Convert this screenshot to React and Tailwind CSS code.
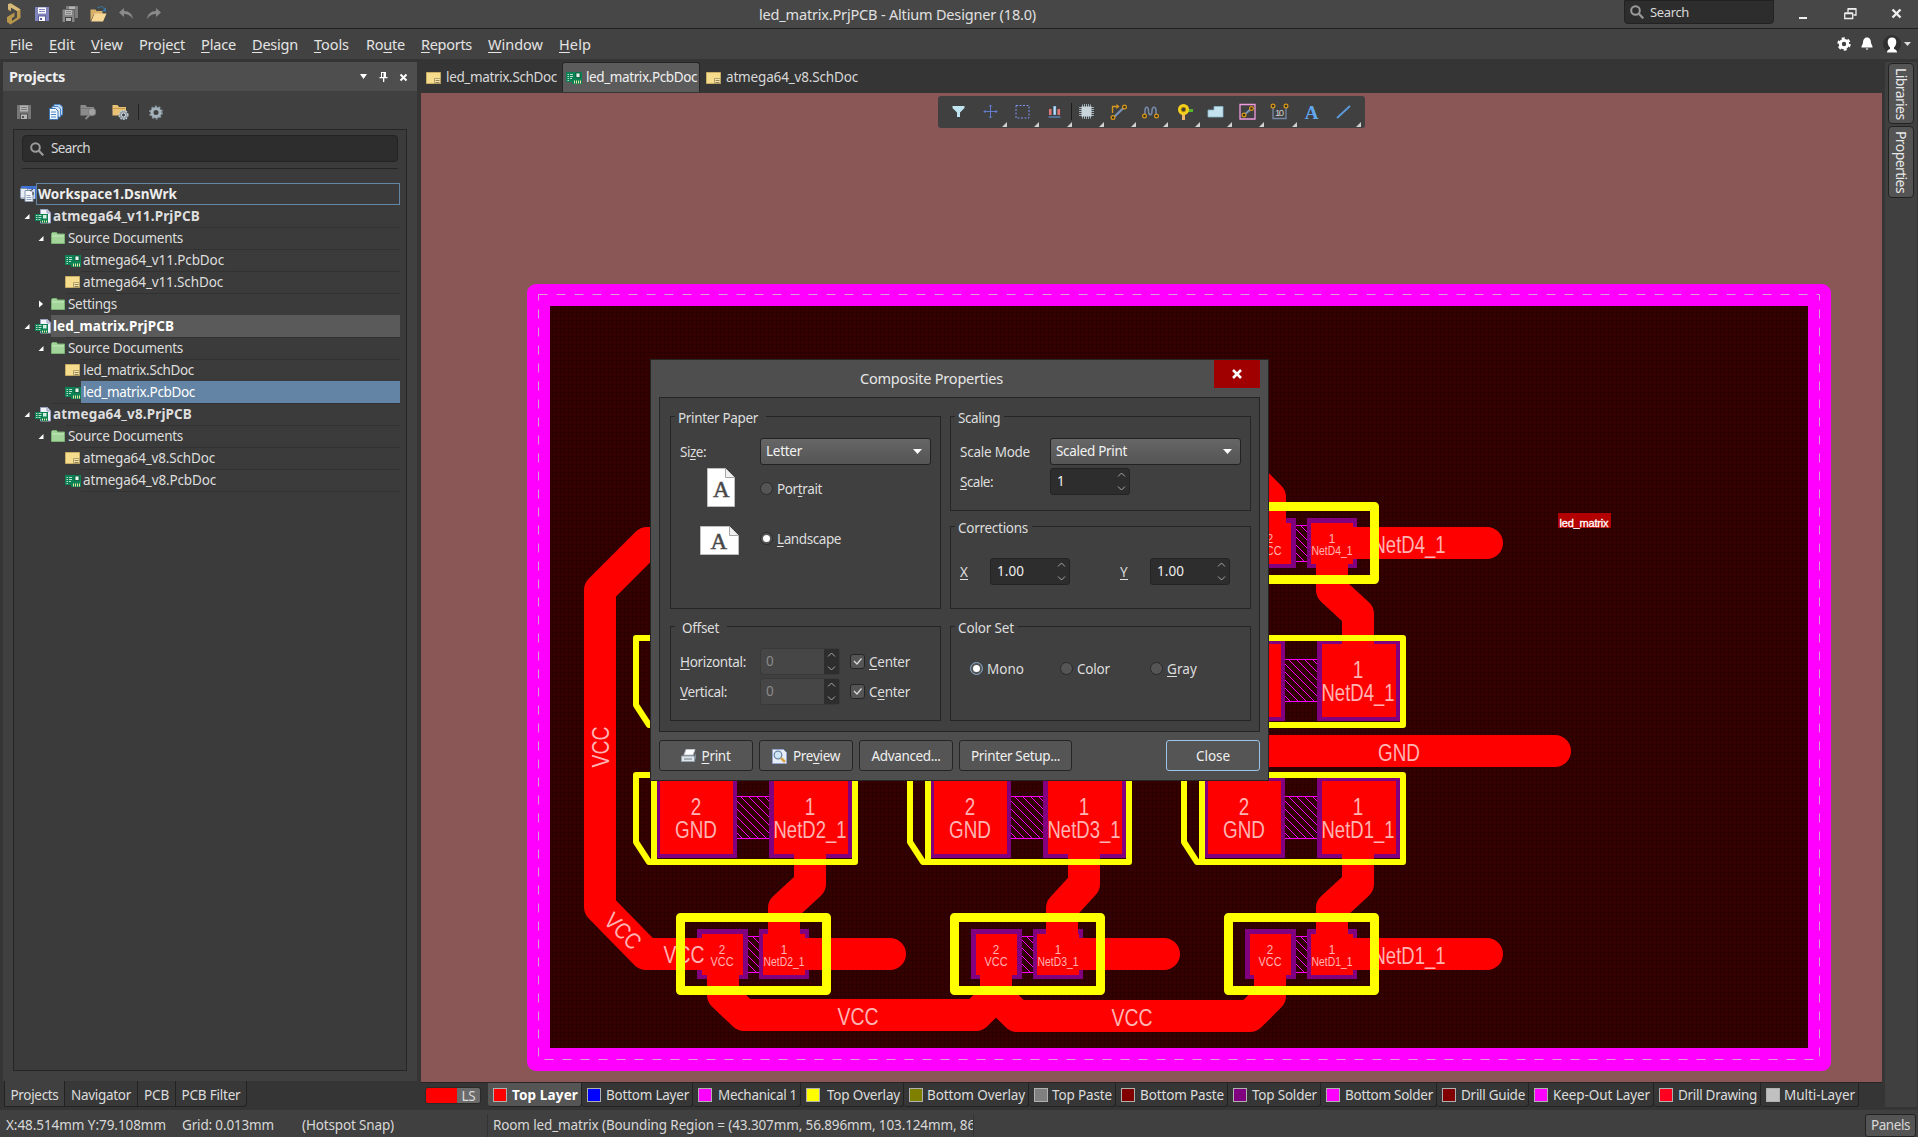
import React, { useLayoutEffect, useRef, useState } from "react";

/* A label whose letter spacing is tuned so that it fills the given width. */
function Fit({ w, children, className = "" }) {
  const ref = useRef(null);
  const [spacing, setSpacing] = useState(0);
  useLayoutEffect(() => {
    const el = ref.current;
    const n = el.textContent.length;
    if (w && n) setSpacing((w - el.getBoundingClientRect().width) / n);
  }, [w]);
  return (
    <span ref={ref} className={"inline-block shrink-0 whitespace-pre " + className} style={{ letterSpacing: spacing + "px" }}>
      {children}
    </span>
  );
}

/* Text with an underlined mnemonic letter, marked by "&". */
function Mn({ t, w, className }) {
  const i = t.indexOf("&");
  if (i < 0) return <Fit w={w} className={className}>{t}</Fit>;
  return (
    <Fit w={w} className={className}>
      {t.slice(0, i)}
      <span className="underline decoration-1 underline-offset-2">{t[i + 1]}</span>
      {t.slice(i + 2)}
    </Fit>
  );
}

/* ---------- small icons ---------- */

const Logo = () => (
  <svg width="16" height="22" viewBox="0 0 16 22" className="shrink-0">
    <path d="M2 1v6l3 1.500V4.500l6 3.500v6.500l-5 3.500v-3l2.500-1.500V9.500L1 14v5l3.500 2.500L14.500 15V6.500L5 0.500z" fill="#b8964c" />
    <path d="M2 1v5l3 1V4.500l6 3.500 3.500-1.500L5 0.500z" fill="#d6b878" />
  </svg>
);
const Floppy = ({ a, b, d }) => (
  <svg width="14" height="14" viewBox="0 0 14 14" className="shrink-0">
    <path d="M0 0h14v14H0z" fill={a} />
    <path d="M3 0.500h8v6H3z" fill={b} />
    <path d="M4 2h6v1H4zM4 4h6v1H4z" fill={a} />
    <path d="M3 8.500h8V14H3z" fill={d} />
    <path d="M4 9.500h6V14H4z" fill={b} />
    <path d="M5 11h2v2H5z" fill={d} />
  </svg>
);
const FloppyAll = () => (
  <svg width="16" height="16" viewBox="0 0 16 16" className="shrink-0">
    <path d="M4 0h12v12H4z" fill="#7d7d7d" />
    <path d="M7 0.500h6v3H7z" fill="#b5b5b5" />
    <path d="M0 3h13v13H0z" fill="#444" />
    <path d="M0.500 3.500h12V16H0.500z" fill="#858585" />
    <path d="M3 4h7v5H3z" fill="#b5b5b5" />
    <path d="M4 5h5v1H4zM4 7h5v1H4z" fill="#858585" />
    <path d="M3 11h7v5H3z" fill="#444" />
    <path d="M4 12h5v3H4z" fill="#b5b5b5" />
  </svg>
);
const OpenFolder = () => (
  <svg width="17" height="16" viewBox="0 0 17 16" className="shrink-0">
    <path d="M0.500 15V3.500h5l1 1.500h6v3H4z" fill="#d9b169" />
    <path d="M1 15.500 4.500 7.500h12L13 15.500z" fill="#f7d796" />
    <path d="M8 2c2-2 5-2 6.500 1" fill="none" stroke="#3779a8" strokeWidth="1.300" strokeDasharray="2 1" />
    <path d="M16 1.500v4h-4z" fill="#3779a8" />
  </svg>
);
const Undo = ({ flip }) => (
  <svg width="15" height="12" viewBox="0 0 15 12" className={flip ? "shrink-0 -scale-x-100" : "shrink-0"}>
    <path d="M5 0 0 4.500 5 9V6c4 0 6.500 1.500 9 5-0.500-5-4-8-9-8z" fill="#8a8a8a" />
  </svg>
);
const Docs = () => (
  <svg width="14" height="16" viewBox="0 0 14 16" className="shrink-0">
    <path d="M5 0.500h6l2.500 2.500v8H5z" fill="#bfd9f2" stroke="#4e86c4" />
    <path d="M3 2.500h6l2.500 2.500v8H3z" fill="#d8e9f8" stroke="#4e86c4" />
    <path d="M0.500 4.500h6L9 7v8.500H0.500z" fill="#edf6fd" stroke="#3c74b4" />
    <path d="M2 8h5M2 10.500h5M2 13h5" stroke="#4e86c4" />
  </svg>
);
const FolderTool = ({ gray }) => (
  <svg width="17" height="16" viewBox="0 0 17 16" className="shrink-0">
    <path d="M0.500 1h5l1.500 2h7v8.500H0.500z" fill={gray ? "#8b8b8b" : "#e9c277"} />
    <path d="M0.500 4.500h13" stroke={gray ? "#777" : "#c79b4c"} />
    {gray ? (
      <>
        <circle cx="12" cy="8" r="3.800" fill="#a2a2a2" stroke="#7b7b7b" />
        <path d="m9.500 11-4 4" stroke="#8b8b8b" strokeWidth="1.800" />
      </>
    ) : (
      <>
        <circle cx="11.500" cy="11" r="4.400" fill="#8f9ba3" stroke="#c2cdd4" strokeDasharray="1.600 1.200" strokeWidth="1.400" />
        <circle cx="11.500" cy="11" r="2" fill="#404040" stroke="#d3dde3" />
      </>
    )}
  </svg>
);
const GearRound = () => (
  <svg width="14" height="15" viewBox="0 0 14 15" className="shrink-0">
    <circle cx="7" cy="7.500" r="5.900" fill="none" stroke="#8b98a1" strokeWidth="2" strokeDasharray="2 1.700" />
    <circle cx="7" cy="7.500" r="4" fill="none" stroke="#a3b1ba" strokeWidth="3" />
  </svg>
);
const Lens = ({ size = 14 }) => (
  <svg width={size} height={size} viewBox="0 0 14 14" className="shrink-0">
    <circle cx="5.500" cy="5.500" r="4.300" fill="none" stroke="#9b9b9b" strokeWidth="2" />
    <path d="m8.800 8.800 4.500 4.500" stroke="#9b9b9b" strokeWidth="2.200" />
  </svg>
);
const SchIcon = () => (
  <svg width="15" height="12" viewBox="0 0 15 12" className="shrink-0">
    <path d="M0.500 0.500h14v11H0.500z" fill="#f6dc8d" stroke="#c9ac66" />
    <path d="M8.500 6.500h6v5h-6z" fill="#f3e2ab" stroke="#a8935a" strokeWidth="0.800" />
    <path d="M9.500 8.500h4M9.500 10.500h4" stroke="#8a7847" strokeWidth="0.900" />
  </svg>
);
const PcbIcon = () => (
  <svg width="16" height="13" viewBox="0 0 16 13" className="shrink-0">
    <path d="M0 1h16v10H0z" fill="#0c8154" />
    <path d="M10 2h4v4.500h-4z" fill="#e8f3ee" stroke="#064f33" strokeWidth="0.800" />
    <path d="M1.500 3.500h1.500M1.500 5.500h1.500M1.500 7.500h1.500M1.500 9.500h1.500M4 3.500h3M4 5.500h3M4 7.500h2" stroke="#b7dccb" />
    <path d="M6 11h10v2H6z" fill="#0c8154" />
    <path d="M8.500 9.500v3M10.500 9.500v3M12.500 9.500v3M14.500 9.500v3" stroke="#e6e6a0" />
  </svg>
);
const PrjIcon = () => (
  <svg width="16" height="15" viewBox="0 0 16 15" className="shrink-0">
    <path d="M5.500 0.500h7L15.500 4v10h-10z" fill="#f1f3fa" stroke="#9ea3c2" />
    <path d="M12 0.500V4h3.500" fill="#c6cbe0" stroke="#9ea3c2" />
    <path d="M0 5h13v7H0z" fill="#0c8154" />
    <path d="M6 12h7v2H6z" fill="#0c8154" />
    <path d="M8 6h3.500v3.500H8z" fill="#d8f0e4" />
    <path d="M1 6.500h1.500M1 8.500h1.500M1 10.500h1.500M3.500 6.500h3M3.500 8.500h3M3.500 10.500h2" stroke="#b7dccb" />
    <path d="M7.500 11.500v2M9.500 11.500v2M11.500 11.500v2" stroke="#e6e6a0" />
  </svg>
);
const FolderGreen = () => (
  <svg width="14" height="12" viewBox="0 0 14 12" className="shrink-0">
    <path d="M0.500 11.500V1.500l1-1h4l1 1.500h7v9.500z" fill="#a3d59b" stroke="#7bb274" />
    <path d="M1 4h12" stroke="#c6eabf" />
  </svg>
);
const WsIcon = () => (
  <svg width="16" height="16" viewBox="0 0 16 16" className="shrink-0">
    <path d="M1 0h15v13H1z" fill="#3f73d6" />
    <path d="M1 3h14v10H1z" fill="#c9d5e6" />
    <path d="M0.500 2.500h6l2 2V12h-8z" fill="#e8eef6" stroke="#8494ad" />
    <path d="M5 4.500h6l2 2v9H5z" fill="#f4f7fb" stroke="#8494ad" />
    <path d="M6.500 9.500h4M6.500 11.500h5M6.500 13.500h5" stroke="#8ea3c0" />
    <path d="m10 5 3-2M13 6v3" stroke="#333" />
  </svg>
);
const Tri = ({ open }) => (
  <svg width="6" height="8" viewBox="0 0 6 8" className="shrink-0">
    {open ? <path d="M5.500 2v5H0.500z" fill="#fff" /> : <path d="M1 0.500 5 4 1 7.500z" fill="#fff" />}
  </svg>
);

/* ---------- top bars ---------- */

const MENUS = [
  ["&File", 23, "w-[39px]"], ["&Edit", 26, "w-[42px]"], ["&View", 32, "w-[48px]"], ["Proje&ct", 46, "w-[62px]"],
  ["&Place", 35, "w-[51px]"], ["&Design", 46, "w-[62px]"], ["&Tools", 35, "w-[52px]"], ["Ro&ute", 39, "w-[55px]"],
  ["&Reports", 51, "w-[67px]"], ["&Window", 55, "w-[71px]"], ["&Help", 32, "w-[40px]"],
];

function TitleBar() {
  return (
    <div className="flex h-[29px] shrink-0 border-b border-[#212121] bg-[#474747]">
      <div className="flex w-[759px] items-start pl-[6px]">
        <div className="mt-[3px] w-[29px]"><Logo /></div>
        <div className="mt-[7px] w-[27px]"><Floppy a="#8183bd" b="#fff" d="#5d5f9d" /></div>
        <div className="mt-[6px] w-[28px]"><FloppyAll /></div>
        <div className="mt-[6px] w-[29px]"><OpenFolder /></div>
        <div className="mt-[8px] w-[27px]"><Undo /></div>
        <div className="mt-[8px]"><Undo flip /></div>
      </div>
      <Fit w={277} className="text-[14.500px] leading-[28px] text-[#e0e0e0]">led_matrix.PrjPCB - Altium Designer (18.0)</Fit>
      <div className="ml-auto flex items-start">
        <div className="flex h-[24px] w-[150px] items-center gap-[6px] rounded-b border border-[#222] bg-[#2d2d2d] pl-[5px]">
          <Lens size={14} />
          <Fit w={39} className="mt-[2px] text-[13px] text-[#d8d8d8]">Search</Fit>
        </div>
        <svg width="144" height="28" viewBox="0 0 144 28" className="shrink-0">
          <path d="M25 18h8" stroke="#eee" strokeWidth="2" />
          <path d="M74 12.500V9h8v6h-2.500" fill="none" stroke="#eee" strokeWidth="1.300" />
          <path d="M70.700 13.500h8v5h-8zM70.700 12.800h8M74 8.700h8" fill="none" stroke="#eee" strokeWidth="1.300" />
          <path d="m118.500 9.500 8 8m0-8-8 8" stroke="#eee" strokeWidth="2.400" />
        </svg>
      </div>
    </div>
  );
}

function MenuBar() {
  return (
    <div className="flex h-[30px] shrink-0 items-center bg-[#424242] pl-[10px] text-[14.500px] text-[#e4e4e4]">
      {MENUS.map(([t, w, cell]) => (
        <div key={t} className={"flex shrink-0 pt-[2px] " + cell}><Mn t={t} w={w} /></div>
      ))}
      <svg width="82" height="30" viewBox="0 0 82 30" className="ml-auto shrink-0">
        <circle cx="8" cy="15" r="3.700" fill="none" stroke="#fff" strokeWidth="3" />
        <circle cx="8" cy="15" r="5.700" fill="none" stroke="#fff" strokeWidth="2" strokeDasharray="3 2.970" />
        <path d="M31 8.500c-3 0-4 2.500-4 5.500l-1.500 3.500v1h11v-1L35 14c0-3-1-5.500-4-5.500zM29.500 19.500h3l-1.500 1.500z" fill="#fff" />
        <circle cx="56" cy="15" r="9" fill="#303030" />
        <path d="M56 8.500c-3 0-4.300 2-4.300 4.500 0 2 1 4.500 2.300 5.500v1.500c-2 0.500-3 1.500-3 3.500h10c0-2-1-3-3-3.500v-1.500c1.300-1 2.300-3.500 2.300-5.500 0-2.500-1.300-4.500-4.300-4.500z" fill="#fff" />
        <path d="M68 13h7l-3.500 4z" fill="#ddd" />
      </svg>
    </div>
  );
}

/* ---------- projects panel ---------- */

const TREE = [
  [0, "prj", "atmega64_v11.PrjPCB", 147, true],
  [1, "dir", "Source Documents", 115, true],
  [2, "pcb", "atmega64_v11.PcbDoc", 141],
  [2, "sch", "atmega64_v11.SchDoc", 140],
  [1, "dir", "Settings", 49, false],
  [0, "prj", "led_matrix.PrjPCB", 121, true, "focus"],
  [1, "dir", "Source Documents", 115, true],
  [2, "sch", "led_matrix.SchDoc", 111],
  [2, "pcb", "led_matrix.PcbDoc", 112, undefined, "sel"],
  [0, "prj", "atmega64_v8.PrjPCB", 139, true],
  [1, "dir", "Source Documents", 115, true],
  [2, "sch", "atmega64_v8.SchDoc", 132],
  [2, "pcb", "atmega64_v8.PcbDoc", 133],
];
const LEFT = ["w-[37px]", "w-[52px]", "w-[67px]"];
const ICON = { prj: <PrjIcon />, dir: <FolderGreen />, pcb: <PcbIcon />, sch: <SchIcon /> };
const RULE = ["before:left-[37px]", "before:left-[52px]", "before:left-[67px]"];

function TreeRow({ row, next }) {
  const [lvl, kind, text, w, open, state] = row;
  const bg = state === "focus" ? "bg-[#5a5a5a] text-white" : state === "sel" ? "bg-[#6384a4] text-white" : "text-[#dedede]";
  return (
    <div className={"relative flex h-[22px] before:absolute before:right-0 before:-bottom-px before:h-px before:bg-[#323232] " + RULE[next]}>
      <div className={"flex shrink-0 items-center justify-end " + LEFT[lvl]}>
        {open !== undefined && <Tri open={open} />}
        <span className={kind === "prj" ? "ml-[5px] flex w-[16px]" : kind === "dir" ? "ml-[7px] flex w-[15px]" : "flex w-[16px]"}>{ICON[kind]}</span>
      </div>
      <div className={"flex flex-1 items-center pl-[2px] text-[13.500px] " + bg + (lvl === 0 ? " font-bold" : "")}>
        <Fit w={w} className="mt-px">{text}</Fit>
      </div>
    </div>
  );
}

function ProjectsPanel() {
  return (
    <div className="flex w-[421px] shrink-0 flex-col pt-[3px] pl-[3px]">
      <div className="flex h-[29px] w-[414px] items-center bg-[#4e4e4e] pl-[6px]">
        <Fit w={56} className="text-[14.500px] font-bold text-[#f0f0f0]">Projects</Fit>
        <svg width="60" height="20" viewBox="0 0 60 20" className="mr-[3px] ml-auto">
          <path d="M6 7h7l-3.500 5z" fill="#fff" />
          <path d="M27 5h5v5h-5zM25.500 10h8v1.200h-8zM29 11h1.300v4H29z" fill="#fff" />
          <path d="M28 6h1.500v4H28z" fill="#4e4e4e" />
          <path d="m46.500 7.500 6 6m0-6-6 6" stroke="#fff" strokeWidth="2" />
        </svg>
      </div>
      <div className="h-[990px] w-[414px] bg-[#404040] px-[10px]">
        <div className="flex h-[38px] items-center pt-[4px] pl-[4px]">
          <div className="w-[32px]"><Floppy a="#777" b="#b5b5b5" d="#505050" /></div>
          <div className="w-[31px]"><Docs /></div>
          <div className="w-[32px]"><FolderTool gray /></div>
          <div className="w-[26px]"><FolderTool /></div>
          <div className="mr-[10px] h-[16px] w-px bg-[#222]" />
          <GearRound />
        </div>
        <div className="flex h-[942px] flex-col border border-[#252525] bg-[#3b3b3b] px-[6px] pt-[5px]">
          <div className="mx-[2px] flex h-[27px] items-center gap-[7px] rounded border border-[#232323] bg-[#2d2d2d] pl-[7px]">
            <Lens size={14} />
            <Fit w={39} className="text-[13.500px] text-[#d8d8d8]">Search</Fit>
          </div>
          <div className="mx-[2px] mt-[6px] h-px bg-[#252525]" />
          <div className="mt-[14px] flex h-[22px] items-center">
            <div className="flex w-[16px] shrink-0"><WsIcon /></div>
            <div className="flex h-[22px] flex-1 items-center border border-[#6384a4] pl-[1px] text-[13.500px] font-bold text-[#ededed]">
              <Fit w={139} className="mt-px">Workspace1.DsnWrk</Fit>
            </div>
          </div>
          <div className="-ml-[6px]">
            {TREE.map((r, i) => (
              <TreeRow key={i} row={r} next={TREE[i + 1] ? TREE[i + 1][0] : 2} />
            ))}
          </div>
        </div>
      </div>
      <div className="ml-px flex h-[26px] text-[13.500px] text-[#dcdcdc]">
        <div className="flex w-[61px] items-center justify-center border-x border-b border-[#222] bg-[#404040] pt-[3px]"><Fit w={48}>Projects</Fit></div>
        <div className="flex w-[73px] items-center justify-center border-r border-b border-[#222] bg-[#383838] pt-[3px]"><Fit w={60}>Navigator</Fit></div>
        <div className="flex w-[38px] items-center justify-center border-r border-b border-[#222] bg-[#383838] pt-[3px]"><Fit w={25}>PCB</Fit></div>
        <div className="flex w-[71px] items-center justify-center rounded-br border-r border-b border-[#222] bg-[#383838] pt-[3px]"><Fit w={59}>PCB Filter</Fit></div>
      </div>
    </div>
  );
}

/* ---------- board drawing ---------- */

const Label = ({ x, y, w, size = 23, rot, children }) => (
  <text x={x - w / 2} y={y} textLength={w} lengthAdjust="spacingAndGlyphs" fontSize={size} fill="#ffb3b3" transform={rot}>
    {children}
  </text>
);

function BigPads({ x, y }) {
  return (
    <g transform={`translate(${x} ${y})`} fill="#800080">
      <path d="M657 778h80v80h-80zM769 778h83v80h-83z" />
      <path d="M660 781h73v73h-73zM774 781h74v73h-74z" fill="#f00" />
      <path d="M737 796h32v42h-32z" fill="url(#hatch)" />
      <path d="M737 796.500h32M737 838.500h32" stroke="#f0f" />
    </g>
  );
}
function BigTop({ x, y, net }) {
  return (
    <g transform={`translate(${x} ${y})`}>
      <path d="M636 775v67l13 20h206v-87zM654 775v87" fill="none" stroke="#ff0" strokeWidth="6" strokeLinejoin="round" />
      {net && (
        <>
          <Label x={696} y={815} w={10.500}>2</Label>
          <Label x={696} y={838} w={42}>GND</Label>
          <Label x={810} y={815} w={10.500}>1</Label>
          <Label x={810} y={838} w={73}>{net}</Label>
        </>
      )}
    </g>
  );
}
function SmallPads({ x, y }) {
  return (
    <g transform={`translate(${x} ${y})`} fill="#800080">
      <path d="M697 929h51v50h-51zM759 929h50v50h-50z" />
      <path d="M702 934h41v41h-41zM763 934h42v41h-42z" fill="#f00" />
      <path d="M748 936h11v37h-11z" fill="url(#hatch)" />
      <path d="M748 936.500h11M748 972.500h11" stroke="#f0f" />
    </g>
  );
}
function SmallTop({ x, y, net }) {
  return (
    <g transform={`translate(${x} ${y})`}>
      <path d="M680.500 917.500h146v73h-146z" fill="none" stroke="#ff0" strokeWidth="9" strokeLinejoin="round" />
      <Label x={722} y={953.500} w={6.500} size={13}>2</Label>
      <Label x={722} y={966} w={23} size={13}>VCC</Label>
      <Label x={784} y={953.500} w={6.500} size={13}>1</Label>
      <Label x={784} y={966} w={41} size={13}>{net}</Label>
    </g>
  );
}

const BIG = [
  [0, 0, "NetD2_1"], [274, 0, "NetD3_1"], [548, 0, "NetD1_1"], [548, -137, "NetD4_1"], [0, -137, null],
];
const SMALL = [[0, 0, "NetD2_1"], [274, 0, "NetD3_1"], [548, 0, "NetD1_1"], [548, -411, "NetD4_1"]];

function Board() {
  return (
    <svg width="1461" height="989" viewBox="421 93 1461 989" fontFamily='"Liberation Sans", sans-serif' className="block">
      <defs>
        <pattern id="hatch" width="8" height="8" patternUnits="userSpaceOnUse">
          <path d="M-1 -1 9 9M-1 7 1 9M7 -1 9 1" stroke="#f0f" strokeWidth="1" />
        </pattern>
        <pattern id="dots" width="4" height="4" patternUnits="userSpaceOnUse">
          <path d="M0 0h4v1H0zM0 0h1v4H0z" fill="#2b0000" />
        </pattern>
      </defs>
      <rect x="527" y="284" width="1304" height="787" rx="9" fill="#f0f" />
      <rect x="550" y="306" width="1258" height="742" fill="#350000" />
      <rect x="550" y="306" width="1258" height="742" fill="url(#dots)" />
      <path d="M538.500 294.500H1819.500V1059.500H538.500z" fill="none" stroke="#d9a0d9" strokeDasharray="9 9" />
      {BIG.map(([x, y]) => <BigPads key={x + "," + y} x={x} y={y} />)}
      {SMALL.map(([x, y]) => <SmallPads key={x + "," + y} x={x} y={y} />)}
      <g fill="none" stroke="#f00" strokeWidth="32" strokeLinejoin="round">
        <path d="M720 543H647L600 590V907L646 954H722" />
        <path d="M785 954H890M1059 954H1164M1333 954H1487M1333 543H1487" strokeLinecap="round" />
        <path d="M810 840V884L784 908V950M1084 840V884L1062 908V950M1358 840V884L1332 908V950" />
        <path d="M723 960V995L744 1015H976L996 995V960" />
        <path d="M996 960V995L1017 1016H1250L1270 996V960" />
        <path d="M1230 457 1270 497V543M1332 543V590L1358 614V660" />
        <path d="M1200 751H1555" strokeLinecap="round" />
      </g>
      <Label x={684} y={963} w={41}>VCC</Label>
      <Label x={0} y={8} w={41} rot="translate(601 747) rotate(-90)">VCC</Label>
      <Label x={0} y={8} w={41} rot="translate(623 931) rotate(45)">VCC</Label>
      <Label x={858} y={1025} w={41}>VCC</Label>
      <Label x={1132} y={1026} w={41}>VCC</Label>
      <Label x={1409} y={964} w={73}>NetD1_1</Label>
      <Label x={1409} y={553} w={73}>NetD4_1</Label>
      <Label x={1399} y={760.500} w={42}>GND</Label>
      {BIG.map(([x, y, n]) => <BigTop key={x + "," + y} x={x} y={y} net={n} />)}
      {SMALL.map(([x, y, n]) => <SmallTop key={x + "," + y} x={x} y={y} net={n} />)}
      <rect x="1558" y="513" width="53" height="15" fill="#b30000" />
      <text x="1559.500" y="526.500" textLength="49" fontSize="11" fill="#fff" stroke="#fff" strokeWidth="0.300">led_matrix</text>
    </svg>
  );
}

/* ---------- canvas toolbar ---------- */

const Ring = ({ x, y }) => <circle cx={x} cy={y} r="1.900" fill="#403010" stroke="#d99a1c" strokeWidth="1.200" />;
const TOOLS = [
  <path key="f" d="M2.500 3h12v2l-4.500 4.500V14H7V9.500L2.500 5z" fill="#bfe3ef" />,
  <path key="c" d="M8.500 2v13M2 8.500h13M7 3.500 8.500 2l1.500 1.500M7 13.500 8.500 15l1.500-1.500M3.500 7 2 8.500 3.500 10M13.500 7 15 8.500 13.500 10" fill="none" stroke="#6683dc" strokeWidth="0.900" />,
  <path key="s" d="M2 2.500h13v12.500H2z" fill="none" stroke="#7d92ee" strokeDasharray="2 1.500" strokeWidth="1" />,
  <g key="b"><path d="M3 6h2.500v6H3zM11.500 6H14v6h-2.500z" fill="#e07878" /><path d="M7.300 3h2.800v9H7.300z" fill="#8bc1e8" /><path d="M2.500 14h12" stroke="#5b7fb0" strokeWidth="1.500" /><path d="M8.700 4v7" stroke="#e8f4ff" strokeWidth="0.800" /></g>,
  <g key="h"><path d="M4.500 1.500v14M6.500 1v15M8.500 1v15M10.500 1v15M12.500 1.500v14M1 4.500h15M1 6.500h15M1 8.500h15M1 10.500h15M1 12.500h15" stroke="#a8bac4" strokeWidth="0.900" /><path d="M3.500 3.500h10v10h-10z" fill="#c8d3da" /></g>,
  <g key="r"><path d="M4 14 14 4.500" stroke="#7a94b8" strokeWidth="2.200" /><path d="M2.500 10V3.500H7" fill="none" stroke="#d99a1c" strokeWidth="1.300" /><path d="M6.500 1 9.500 3.500 6.500 6z" fill="#d99a1c" /><Ring x={3} y={14.500} /><Ring x={14.500} y={4} /></g>,
  <g key="m"><path d="M3 12V8c0-5 3.500-5 3.500 0s3.500 5 3.500 0 4-5 4 0v4" fill="none" stroke="#7488a6" strokeWidth="1.600" /><Ring x={2.500} y={13} /><Ring x={14.500} y={13} /></g>,
  <g key="v"><path d="M10 6h8v3h-8z" fill="#58b52c" /><path d="M7 10h3v7H7z" fill="#f0b36b" /><circle cx="8.500" cy="6.500" r="5.500" fill="#f5cf1c" /><circle cx="8.500" cy="6.500" r="2.300" fill="#404040" stroke="#b88f00" /></g>,
  <path key="p" d="M1 7h6V3.500h9V14H1z" fill="#c3e2ee" stroke="#86b7cc" strokeWidth="0.800" />,
  <g key="d"><path d="M1 1.500h15v14.500H1z" fill="none" stroke="#f09be0" strokeWidth="1.300" /><path d="m5 12 7.500-6.500" stroke="#7a94b8" strokeWidth="2" /><Ring x={5} y={12} /><Ring x={12.500} y={5.500} /></g>,
  <g key="n"><path d="M2 3v12.500h13V3" fill="none" stroke="#7488a6" strokeWidth="1.300" /><Ring x={2} y={3} /><Ring x={15} y={3} /><text x="4" y="12.500" fontSize="9.500" textLength="9" fontFamily='"Liberation Sans", sans-serif' fill="#ccc">10</text></g>,
  <text key="a" x="1.800" y="15.500" fontSize="19" fontWeight="bold" fontFamily='"Liberation Serif", serif' fill="#62a6ee">A</text>,
  <path key="l" d="M2 15 15 3" stroke="#5b9bdc" strokeWidth="1.800" />,
];
const CORNER = [0, 1, 1, 1, 1, 1, 1, 1, 1, 1, 1, 0, 1];

function CanvasToolbar() {
  return (
    <div className="absolute top-[3px] left-[517px] flex h-[32px] w-[427px] rounded-[3px] bg-[#404040] pl-[4px]">
      {TOOLS.map((t, i) => (
        <div key={i} className={"relative flex w-[32.150px] shrink-0 items-center justify-center pb-px " + (i === 3 ? "after:absolute after:top-[7px] after:right-[-1px] after:h-[17px] after:w-px after:bg-[#1c1c1c]" : "")}>
          <svg width="17" height="17" viewBox="0 0 17 17" className="overflow-visible">{t}</svg>
          {CORNER[i] === 1 && (
            <svg width="5" height="5" viewBox="0 0 5 5" className="absolute right-[-1px] bottom-px"><path d="M5 0v5H0z" fill="#d0d0d0" /></svg>
          )}
        </div>
      ))}
    </div>
  );
}

/* ---------- document area ---------- */

const LAYERS = [
  ["Top Layer", 66, "#ff0000", "w-[94px]"], ["Bottom Layer", 83, "#0000ff", "w-[111px]"], ["Mechanical 1", 79, "#ff00ff", "w-[108px]"],
  ["Top Overlay", 73, "#ffff00", "w-[103px]"], ["Bottom Overlay", 98, "#808000", "w-[125px]"], ["Top Paste", 60, "#808080", "w-[87px]"],
  ["Bottom Paste", 84, "#800000", "w-[112px]"], ["Top Solder", 65, "#800080", "w-[93px]"], ["Bottom Solder", 88, "#ff00ff", "w-[116px]"],
  ["Drill Guide", 64, "#800000", "w-[92px]"], ["Keep-Out Layer", 97, "#ff00ff", "w-[125px]"], ["Drill Drawing", 79, "#ff0020", "w-[107px]"],
  ["Multi-Layer", 71, "#c0c0c0", "w-[98px]"],
];

function DocArea() {
  return (
    <div className="flex w-[1461px] shrink-0 flex-col">
      <div className="flex h-[34px] pt-[3px] text-[13.500px] text-[#d8d8d8]">
        <div className="flex w-[141px] items-center gap-[5px] pl-[5px]"><SchIcon /><Fit w={111}>led_matrix.SchDoc</Fit></div>
        <div className="flex h-[30px] w-[138px] items-center gap-[4px] rounded-t-[3px] border border-b-0 border-[#252525] bg-[#5b5b5b] pl-[3px] text-[#f0f0f0]"><PcbIcon /><Fit w={111}>led_matrix.PcbDoc</Fit></div>
        <div className="flex items-center gap-[5px] pl-[6px]"><SchIcon /><Fit w={132}>atmega64_v8.SchDoc</Fit></div>
      </div>
      <div className="relative h-[989px] bg-[#8b5656]">
        <Board />
        <CanvasToolbar />
      </div>
      <div className="flex h-[25px] border-t border-[#252525] pl-[4px] text-[13.500px] text-[#dcdcdc]">
        <div className="mt-[4px] flex h-[17px] w-[56px] overflow-hidden rounded-[3px] border border-[#2a2a2a]">
          <div className="w-[31px] bg-[#ff0000]" />
          <div className="flex flex-1 items-center justify-center bg-[#6b6b6b] pt-px"><Fit w={14}>LS</Fit></div>
        </div>
        <div className="ml-[7px] flex">
          {LAYERS.map(([name, w, color, cell], i) => (
            <div key={name} className={"flex shrink-0 items-center justify-between rounded-b-[3px] border-r border-b border-[#222] pt-px pr-[3px] pl-[5px] " + cell + (i === 0 ? " bg-[#555] font-bold text-white" : " bg-[#363636]")}>
              <span className="mb-px h-[14px] w-[14px] shrink-0 border border-[#b0b0b0]" style={{ backgroundColor: color }} />
              <Fit w={w} className="mt-px">{name}</Fit>
            </div>
          ))}
        </div>
      </div>
    </div>
  );
}

function SideStrip() {
  return (
    <div className="mt-[3px] ml-[3px] flex h-[1045px] w-[32px] flex-col gap-[2px] bg-[#404040] pt-px pl-[3px] text-[14px] text-[#e8e8e8]">
      <div className="flex h-[61px] w-[26px] items-center justify-center rounded border border-[#222] bg-[#545454] [writing-mode:vertical-rl]"><span className="tracking-[-0.600px]">Libraries</span></div>
      <div className="flex h-[72px] w-[26px] items-center justify-center rounded border border-[#222] bg-[#545454] [writing-mode:vertical-rl]"><span className="tracking-[-0.600px]">Properties</span></div>
    </div>
  );
}

function StatusBar() {
  return (
    <div className="flex h-[27px] shrink-0 items-end bg-[#404040] pl-[6px] text-[13.500px] text-[#d8d8d8]">
      <div className="flex h-[23px] w-[176px] items-center"><Fit w={160}>X:48.514mm Y:79.108mm</Fit></div>
      <div className="flex h-[23px] w-[120px] items-center"><Fit w={92}>Grid: 0.013mm</Fit></div>
      <div className="flex h-[23px] w-[185px] items-center"><Fit w={92}>(Hotspot Snap)</Fit></div>
      <div className="flex h-[23px] w-[487px] items-center overflow-hidden border-x border-[#333] pl-[5px]"><Fit w={482}>Room led_matrix (Bounding Region = (43.307mm, 56.896mm, 103.124mm, 86</Fit></div>
      <div className="mr-[2px] ml-auto flex h-[23px] w-[51px] items-center justify-center rounded-[3px] border border-[#222] bg-[#545454]"><Fit w={39}>Panels</Fit></div>
    </div>
  );
}

/* ---------- print dialog ---------- */

function Group({ title, tw, className, legendX = "left-[4px] pr-[8px] pl-[3px]", children }) {
  return (
    <div className={"relative border border-[#252525] " + className}>
      <div className={"absolute -top-[10px] flex h-[22px] items-center bg-[#404040] " + legendX}><Fit w={tw}>{title}</Fit></div>
      {children}
    </div>
  );
}
const Combo = ({ text, w, className }) => (
  <div className={"flex h-[27px] items-center justify-between rounded-[3px] border border-[#222] bg-linear-to-b from-[#666] to-[#555] pr-[8px] pl-[5px] text-[#f2f2f2] " + className}>
    <Fit w={w}>{text}</Fit>
    <svg width="9" height="5" viewBox="0 0 9 5"><path d="M0 0h9L4.500 5z" fill="#fff" /></svg>
  </div>
);
const Spin = ({ text, w, off }) => (
  <div className={"flex h-[27px] w-[80px] shrink-0 items-center justify-between rounded-[3px] border " + (off ? "border-[#393939] bg-[#464646] text-[#8a8a8a] pl-[5px]" : "border-[#232323] bg-[#2d2d2d] text-[#eee] pl-[6px]")}>
    <Fit w={w}>{text}</Fit>
    <div className={"flex h-full w-[15px] items-center justify-center " + (off ? "bg-[#2d2d2d]" : "")}>
      <svg width="9" height="19" viewBox="0 0 9 19"><path d="M1 4.500 4.500 1 8 4.500M1 14.500 4.500 18 8 14.500" fill="none" stroke="#a8a8a8" /></svg>
    </div>
  </div>
);
const Radio = ({ on, focus }) => (
  <span className={"flex h-[13px] w-[13px] shrink-0 items-center justify-center rounded-full border bg-[#555] " + (focus ? "border-[#86add2]" : "border-[#2a2a2a]")}>
    {on && <span className="h-[7px] w-[7px] rounded-full bg-white" />}
  </span>
);
const Check = ({ t }) => (
  <>
    <span className="ml-[10px] flex h-[15px] w-[15px] items-center justify-center rounded-[3px] border border-[#252525] bg-[#555]">
      <svg width="9" height="7" viewBox="0 0 9 7"><path d="m1 3 3 3 4.500-5.500" fill="none" stroke="#ddd" strokeWidth="1.200" /></svg>
    </span>
    <Mn t={t} w={41} className="mt-[2px] ml-[4px]" />
  </>
);
const Paper = ({ wide }) =>
  wide ? (
    <svg width="39" height="29" viewBox="0 0 39 29">
      <path d="M0.500 0.500h29l9 9v19h-38z" fill="#fff" stroke="#bdbdbd" />
      <path d="M29.500 0.500v9h9" fill="#f0f0f0" stroke="#a5a5a5" />
      <text x="10.500" y="23" fontSize="23" stroke="#484848" strokeWidth="0.500" fontFamily='"Liberation Serif", serif' fill="#484848">A</text>
    </svg>
  ) : (
    <svg width="28" height="39" viewBox="0 0 28 39">
      <path d="M0.500 0.500h18l9 9v29h-27z" fill="#fff" stroke="#bdbdbd" />
      <path d="M18.500 0.500v9h9" fill="#f0f0f0" stroke="#a5a5a5" />
      <text x="6" y="29" fontSize="23" stroke="#484848" strokeWidth="0.500" fontFamily='"Liberation Serif", serif' fill="#484848">A</text>
    </svg>
  );
const Btn = ({ className, children }) => (
  <div className={"flex h-[31px] items-center justify-center rounded-[3px] border bg-[#555] pt-px text-[#f0f0f0] " + className}>{children}</div>
);

function Dialog() {
  return (
    <div className="absolute top-[359px] left-[650px] flex h-[422px] w-[619px] flex-col border border-[#252525] bg-[#4e4e4e] text-[13.500px] text-[#dedede]">
      <div className="flex h-[37px] shrink-0">
        <div className="w-[209px]" />
        <Fit w={143} className="text-[14.500px] leading-[36px] text-[#e6e6e6]">Composite Properties</Fit>
        <div className="mr-[8px] ml-auto flex h-[28px] w-[46px] items-center justify-center bg-[#a00000]">
          <svg width="10" height="10" viewBox="0 0 10 10"><path d="m1 1 8 8m0-8-8 8" stroke="#fff" strokeWidth="2.500" /></svg>
        </div>
      </div>
      <div className="mx-[8px] flex h-[335px] w-[601px] gap-[9px] border border-[#252525] bg-[#404040] pt-[18px] pl-[10px]">
        <div className="flex w-[271px] flex-col gap-[16px]">
          <Group title="Printer Paper" tw={80} className="h-[193px] pt-[21px] pl-[9px]">
            <div className="flex h-[27px] items-center"><div className="mt-[2px] w-[80px]"><Mn t="Si&ze:" w={26} /></div><Combo text="Letter" w={36} className="w-[171px]" /></div>
            <div className="mt-[3px] flex h-[39px] items-center"><div className="w-[80px] pl-[27px]"><Paper /></div><div className="mt-[2px] flex items-center"><Radio /><Mn t="Por&trait" w={45} className="mt-[2px] ml-[4px]" /></div></div>
            <div className="mt-[19px] flex h-[29px] items-center"><div className="w-[80px] pl-[20px]"><Paper wide /></div><div className="-mt-[4px] flex items-center"><Radio on /><Mn t="&Landscape" w={64} className="mt-[2px] ml-[4px]" /></div></div>
          </Group>
          <Group title="Offset" tw={37} className="mt-px h-[95px] pt-[21px] pl-[9px]" legendX="left-[4px] pr-[8px] pl-[7px]">
            <div className="flex h-[27px] items-center"><div className="mt-[2px] w-[80px]"><Mn t="&Horizontal:" w={66} /></div><Spin text="0" off /><Check t="&Center" /></div>
            <div className="mt-[3px] flex h-[27px] items-center"><div className="mt-[2px] w-[80px]"><Mn t="&Vertical:" w={47} /></div><Spin text="0" off /><Check t="C&enter" /></div>
          </Group>
        </div>
        <div className="flex w-[301px] flex-col">
          <Group title="Scaling" tw={42} className="h-[95px] pt-[21px] pl-[9px]" legendX="left-[4px] pr-[4px] pl-[3px]">
            <div className="flex h-[27px] items-center"><div className="mt-[2px] w-[90px]"><Fit w={70}>Scale Mode</Fit></div><Combo text="Scaled Print" w={71} className="w-[191px]" /></div>
            <div className="mt-[3px] flex h-[27px] items-center"><div className="mt-[2px] w-[90px]"><Mn t="&Scale:" w={33} /></div><Spin text="1" /></div>
          </Group>
          <Group title="Corrections" tw={70} className="mt-[15px] h-[83px] pt-[31px] pl-[9px]" legendX="left-[4px] pr-[4px] pl-[3px]">
            <div className="flex h-[27px] items-center">
              <div className="mt-[2px] w-[30px]"><Mn t="&X" w={8} /></div><Spin text="1.00" w={27} />
              <div className="mt-[2px] ml-[50px] w-[30px]"><Mn t="&Y" w={8} /></div><Spin text="1.00" w={27} />
            </div>
          </Group>
          <Group title="Color Set" tw={56} className="mt-[17px] h-[95px] pt-[28px] pl-[19px]" legendX="left-[4px] pr-[4px] pl-[3px]">
            <div className="flex h-[27px] items-center">
              <div className="flex w-[90px] items-center gap-[4px]"><Radio on focus /><Fit w={37} className="mt-[2px]">Mono</Fit></div>
              <div className="flex w-[90px] items-center gap-[4px]"><Radio /><Fit w={33} className="mt-[2px]">Color</Fit></div>
              <div className="flex items-center gap-[4px]"><Radio /><Mn t="&Gray" w={30} className="mt-[2px]" /></div>
            </div>
          </Group>
        </div>
      </div>
      <div className="mx-[8px] mt-[8px] flex gap-[6px]">
        <Btn className="w-[94px] gap-[5px] border-[#252525]">
          <svg width="15" height="14" viewBox="0 0 15 14"><path d="M5 0.500h9L12 6H3z" fill="#fff" stroke="#b9c3cc" /><path d="M0.500 7h13v5.500H0.500z" fill="#dfe4e8" stroke="#97a3ad" /><path d="M13.500 7 14.800 4v5l-1.300 3.500z" fill="#8d99a3" /><path d="M3 10h8" stroke="#6f7c87" /></svg>
          <Mn t="&Print" w={29} />
        </Btn>
        <Btn className="w-[94px] gap-[6px] border-[#252525]">
          <svg width="15" height="15" viewBox="0 0 15 15"><path d="M0.500 0.500h11l3 3v11H0.500z" fill="#e9eff9" stroke="#93a5cf" /><circle cx="6" cy="6" r="3.800" fill="#cfe6f7" stroke="#6f87a8" strokeWidth="1.300" /><path d="m9 9 4 4" stroke="#d9a14a" strokeWidth="2.500" /></svg>
          <Mn t="Pre&view" w={47} />
        </Btn>
        <Btn className="w-[94px] border-[#252525]"><Fit w={69}>Advanced...</Fit></Btn>
        <Btn className="w-[113px] border-[#252525]"><Fit w={89}>Printer Setup...</Fit></Btn>
        <Btn className="ml-auto w-[94px] border-[#9cc3ea]"><Fit w={34}>Close</Fit></Btn>
      </div>
    </div>
  );
}

export default function App() {
  return (
    <div className='relative flex h-[1137px] w-[1918px] flex-col overflow-hidden bg-[#353535] font-["Noto_Sans",sans-serif]'>
      <TitleBar />
      <MenuBar />
      <div className="flex h-[1051px] shrink-0">
        <ProjectsPanel />
        <DocArea />
        <SideStrip />
      </div>
      <StatusBar />
      <Dialog />
    </div>
  );
}
